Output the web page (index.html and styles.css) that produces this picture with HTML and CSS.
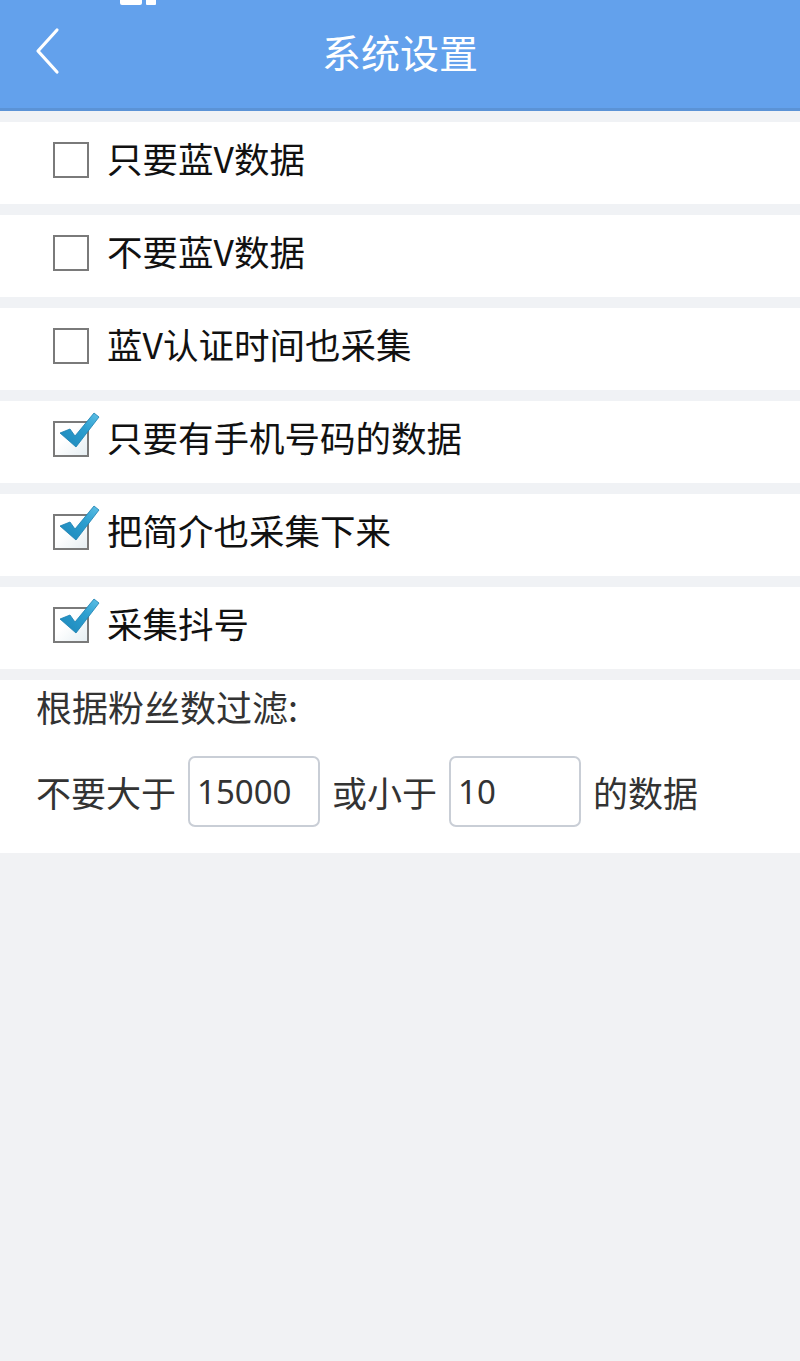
FILE: index.html
```html
<!DOCTYPE html>
<html lang="zh">
<head>
<meta charset="utf-8">
<link rel="stylesheet" href="styles.css">
</head>
<body>
<div class="page">
  <header class="topbar">
    <div class="status-frag"><span class="sb-hd"></span><span class="sb-sm"></span></div>
    <svg class="back" width="30" height="48" viewBox="0 0 30 48"><path d="M24 3 L5 24 L24 45" fill="none" stroke="#fff" stroke-width="3.2" stroke-linecap="round" stroke-linejoin="round"/></svg>
    <h1 class="title">系统设置</h1>
  </header>

  <div class="list">
    <div class="row"><span class="box"></span><span class="label">只要蓝V数据</span></div>
    <div class="row"><span class="box"></span><span class="label">不要蓝V数据</span></div>
    <div class="row"><span class="box"></span><span class="label">蓝V认证时间也采集</span></div>
    <div class="row"><span class="box checked"><svg class="tick" width="46" height="44" viewBox="0 0 46 44"><defs><linearGradient id="g1" x1="0" y1="1" x2="1" y2="0"><stop offset="0" stop-color="#1b86b9"/><stop offset="0.6" stop-color="#2d9fd0"/><stop offset="1" stop-color="#5ec0e6"/></linearGradient></defs><path d="M4 22 L14 18 L19 25 L38 2 L43 6 L20 36 Z" fill="url(#g1)" stroke="#1a7fb0" stroke-width="0.8" stroke-linejoin="round"/></svg></span><span class="label">只要有手机号码的数据</span></div>
    <div class="row"><span class="box checked"><svg class="tick" width="46" height="44" viewBox="0 0 46 44"><defs><linearGradient id="g2" x1="0" y1="1" x2="1" y2="0"><stop offset="0" stop-color="#1b86b9"/><stop offset="0.6" stop-color="#2d9fd0"/><stop offset="1" stop-color="#5ec0e6"/></linearGradient></defs><path d="M4 22 L14 18 L19 25 L38 2 L43 6 L20 36 Z" fill="url(#g2)" stroke="#1a7fb0" stroke-width="0.8" stroke-linejoin="round"/></svg></span><span class="label">把简介也采集下来</span></div>
    <div class="row"><span class="box checked"><svg class="tick" width="46" height="44" viewBox="0 0 46 44"><defs><linearGradient id="g3" x1="0" y1="1" x2="1" y2="0"><stop offset="0" stop-color="#1b86b9"/><stop offset="0.6" stop-color="#2d9fd0"/><stop offset="1" stop-color="#5ec0e6"/></linearGradient></defs><path d="M4 22 L14 18 L19 25 L38 2 L43 6 L20 36 Z" fill="url(#g3)" stroke="#1a7fb0" stroke-width="0.8" stroke-linejoin="round"/></svg></span><span class="label">采集抖号</span></div>
  </div>

  <section class="filter">
    <div class="filter-title">根据粉丝数过滤:</div>
    <div class="filter-line">
      <span class="ftext">不要大于</span>
      <span class="input">15000</span>
      <span class="ftext">或小于</span>
      <span class="input">10</span>
      <span class="ftext">的数据</span>
    </div>
  </section>
</div>
</body>
</html>
```

FILE: styles.css
```css
html, body {
  margin: 0;
  padding: 0;
  background: #f1f2f4;
}
body {
  font-family: "Noto Sans CJK SC", "Noto Sans", sans-serif;
  width: 800px;
  height: 1361px;
  overflow: hidden;
}
.page {
  width: 800px;
}
.topbar {
  position: relative;
  height: 108px;
  background: #63a1ec;
  border-bottom: 3px solid #5b93d6;
  display: flex;
  align-items: center;
  justify-content: center;
}
.status-frag {
  position: absolute;
  top: -3px;
  left: 120px;
  display: flex;
  gap: 4px;
}
.sb-hd {
  display: block;
  width: 22px;
  height: 8px;
  background: #fff;
  border-radius: 2px;
}
.sb-sm {
  display: block;
  width: 10px;
  height: 8px;
  background: #fff;
  border-radius: 1px;
}
.back {
  position: absolute;
  left: 33px;
  top: 27px;
}
.title {
  margin: 0;
  margin-top: -6px;
  color: #fff;
  font-size: 39px;
  font-weight: 400;
}
.list {
  padding-top: 11px;
  display: flex;
  flex-direction: column;
  gap: 11px;
  background: #f0f2f5;
}
.row {
  height: 82px;
  background: #fff;
  display: flex;
  align-items: center;
  padding-left: 53px;
}
.box {
  position: relative;
  flex: none;
  width: 32px;
  height: 32px;
  border: 2px solid #7a7a7a;
  background: #fff;
  margin-top: -7px;
}
.box.checked {
  background: linear-gradient(135deg, #ffffff 40%, #e6eef2 100%);
}
.tick {
  position: absolute;
  left: 1px;
  top: -12px;
}
.label {
  margin-left: 18px;
  font-size: 35.5px;
  color: #111;
  line-height: 1;
  margin-top: -10px;
}
.filter {
  margin-top: 11px;
  background: #fff;
  height: 173px;
  padding: 0 36px;
  box-sizing: border-box;
}
.filter-title {
  font-size: 36px;
  color: #333;
  line-height: 1;
  padding-top: 8px;
  height: 76px;
  box-sizing: border-box;
}
.filter-line {
  display: flex;
  align-items: center;
  gap: 12px;
  height: 71px;
}
.ftext {
  font-size: 35px;
  color: #333;
  line-height: 1;
}
.input {
  width: 132px;
  height: 71px;
  box-sizing: border-box;
  border: 2px solid #c9ced6;
  border-radius: 7px;
  display: flex;
  align-items: center;
  padding-left: 7px;
  font-family: "Noto Sans", "Roboto", sans-serif;
  font-size: 33px;
  color: #333;
}
```
